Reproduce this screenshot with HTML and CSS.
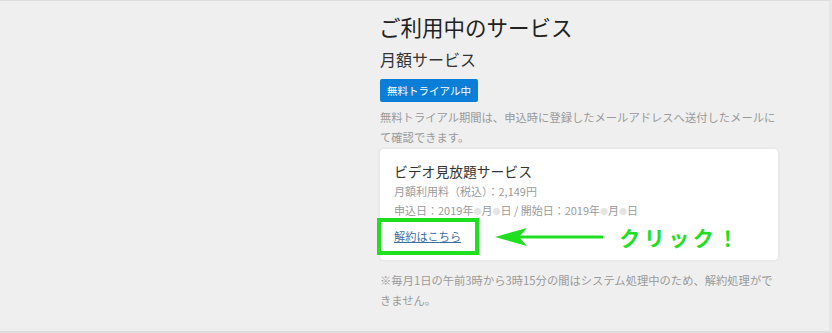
FILE: index.html
```html
<!DOCTYPE html>
<html lang="ja">
<head>
    <meta charset="UTF-8">
    <meta name="viewport" content="width=device-width, initial-scale=1.0">
    <title>ご利用中のサービス</title>
    <link rel="stylesheet" href="styles.css">
</head>
<body>
    <div class="layout">
        <div class="side"></div>
        <main class="main">
            <h1 class="title">ご利用中のサービス</h1>
            <h2 class="subtitle">月額サービス</h2>
            <span class="badge">無料トライアル中</span>
            <p class="note">無料トライアル期間は、申込時に登録したメールアドレスへ送付したメールにて確認できます。</p>

            <div class="card">
                <div class="card-title">ビデオ見放題サービス</div>
                <div class="card-text">月額利用料（税込）：2,149円</div>
                <div class="card-text">申込日：2019年<span class="blur">●</span>月<span class="blur">●</span>日 / 開始日：2019年<span class="blur">●</span>月<span class="blur">●</span>日</div>
                <div class="cancel-row">
                    <a class="cancel" href="#">解約はこちら</a>
                    <div class="callout">
                        <svg class="arrow" width="110" height="20" viewBox="0 0 110 20">
                            <line x1="14" y1="10" x2="108" y2="10" stroke="#1ee01e" stroke-width="3"/>
                            <polygon points="0,10 32,1 24,10 32,19" fill="#1ee01e"/>
                        </svg>
                        <span class="click">クリック！</span>
                    </div>
                </div>
            </div>

            <p class="note note-bottom">※毎月1日の午前3時から3時15分の間はシステム処理中のため、解約処理ができません。</p>
        </main>
    </div>
</body>
</html>
```

FILE: styles.css
```css
html, body {
    margin: 0;
    height: 100%;
}

body {
    background-color: #efefef;
    border-top: 1px solid #dedede;
    border-bottom: 2px solid #dcdcdc;
    border-right: 3px solid #e6e6e6;
    box-sizing: border-box;
    font-family: "Noto Sans CJK JP", "Noto Sans", sans-serif;
    color: #333;
}

.layout {
    display: grid;
    grid-template-columns: 380px 398px;
}

.main {
    padding-top: 11px;
}

.title {
    font-size: 21.5px;
    font-weight: normal;
    line-height: 30px;
    margin: 0 0 0 -1px;
    color: #222;
}

.subtitle {
    font-size: 16px;
    font-weight: normal;
    line-height: 22px;
    margin: 6px 0 0;
    color: #333;
}

.badge {
    display: inline-block;
    margin-top: 9px;
    width: 98px;
    height: 23px;
    line-height: 23px;
    text-align: center;
    background-color: #0b7fd8;
    color: #fff;
    font-size: 10.5px;
    border-radius: 2px;
}

.note {
    font-size: 11.3px;
    line-height: 20px;
    color: #9a9a9a;
    margin: 5px 0 0;
}

.card {
    margin-top: 2px;
    background-color: #fff;
    border-radius: 4px;
    box-shadow: 0 0 0 2px #e9e9e9;
    padding: 11px 14px 5px;
}

.card-title {
    font-size: 13.8px;
    line-height: 22px;
    color: #333;
}

.card-text {
    font-size: 11px;
    line-height: 18.5px;
    color: #9a9a9a;
}

.blur {
    color: #e4e4e4;
    font-size: 8px;
}

.cancel-row {
    display: flex;
    align-items: center;
    margin-top: -3px;
}

.cancel {
    display: inline-block;
    margin-left: -17px;
    padding: 4px 14px 5px 13px;
    border: 4px solid #1ee01e;
    font-size: 11.2px;
    line-height: 20px;
    color: #3b6fa6;
}

.callout {
    display: flex;
    align-items: center;
    margin-left: 16px;
}

.arrow {
    display: block;
}

.click {
    margin-left: 14px;
    font-size: 21px;
    font-weight: bold;
    letter-spacing: 3.5px;
    color: #1ee01e;
}

.note-bottom {
    margin-top: 10px;
}
```
